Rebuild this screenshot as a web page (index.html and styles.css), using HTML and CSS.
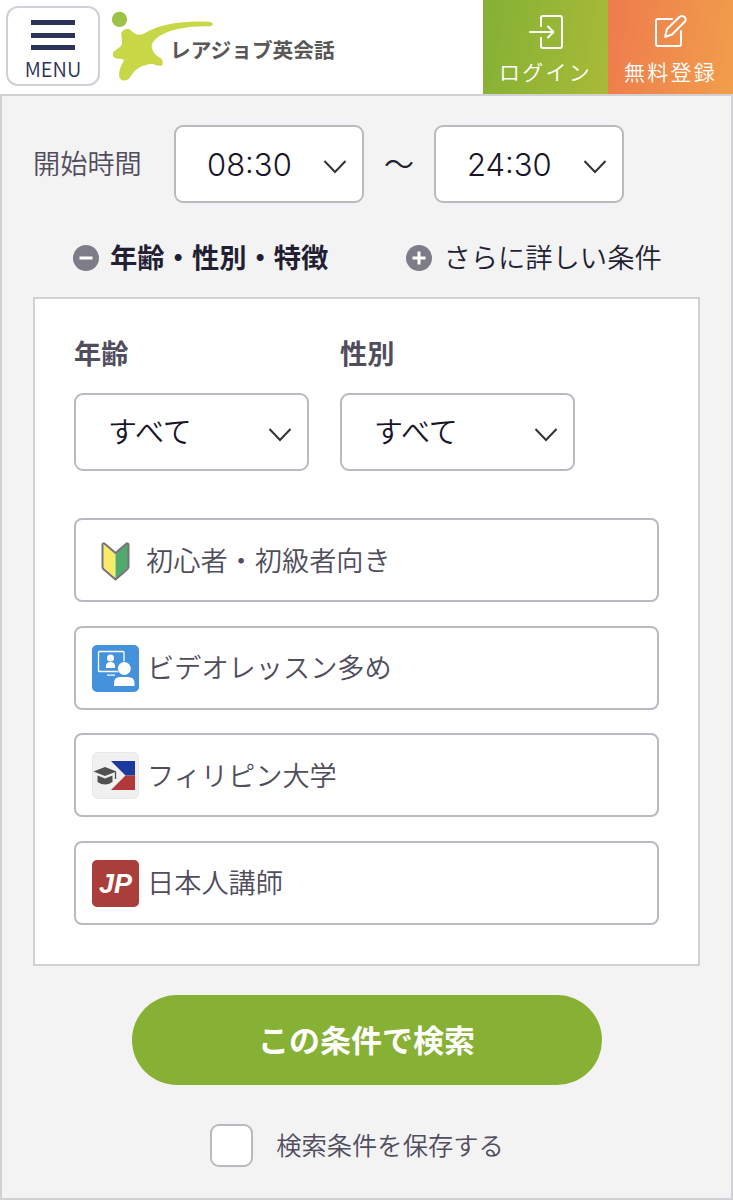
FILE: index.html
```html
<!DOCTYPE html>
<html lang="ja">
<head>
  <meta charset="UTF-8">
  <meta name="viewport" content="width=device-width, initial-scale=1.0">
  <title>講師検索 | レアジョブ英会話</title>
  <link rel="stylesheet" href="styles.css">
</head>
<body>
  <header class="header">
    <button class="menu" type="button">
      <span class="menu-bars"></span>
      <span class="menu-text">MENU</span>
    </button>
    <a class="logo" href="#">
      <svg class="logo-mark" width="104" height="72" viewBox="0 0 104 72">
        <circle cx="9.500" cy="8.400" r="7.700" fill="#9cc346"/>
        <path fill="#c7d745" d="M11.200 24C11 19 17 16 21 19.500C25 24 30 25 35 22C51 12.500 74 9.500 99 10.800Q103 11.500 102.700 13.500Q102 15.300 98 15.300C78 15 60 18 48 26C42 31 41 34 42 37C43 42 47 45 51 47.500C54 51 53 55 50 54.800C47 54.800 45 53 41 53C34 53.500 27 57 23 62C20 66 19 69.500 14 69.500C9 69 8.500 65 9.500 60C10.500 55 13 52 14 49Q13 48 10 47.800C4 48 1 44 4 40.500C7 38 11 36 12 33Q12.500 29 11.200 24Z"/>
      </svg>
      <span class="logo-text">レアジョブ英会話</span>
    </a>
    <a class="header-btn login" href="#">
      <svg width="40" height="40" viewBox="0 0 40 40">
        <path d="M15 15V7q0-2 2-2h17q2 0 2 2v28q0 2-2 2H17q-2 0-2-2v-8M4 21h23M22 15.500l5.500 5.500-5.500 5.500"/>
      </svg>
      <span>ログイン</span>
    </a>
    <a class="header-btn signup" href="#">
      <svg width="40" height="40" viewBox="0 0 40 40">
        <path d="M21 8H7q-2 0-2 2v23q0 2 2 2h21q2 0 2-2V20M14 26l2-8L28.500 6q2.500-2 5 0t0 5L21 23.500Z"/>
      </svg>
      <span>無料登録</span>
    </a>
  </header>

  <main class="search">
    <div class="time-row">
      <span class="time-label">開始時間</span>
      <label class="select time">
        <select><option>08:30</option></select>
        <svg width="24" height="16" viewBox="0 0 24 16"><path d="M1.500 2L12 13L22.500 2"/></svg>
      </label>
      <span class="tilde">〜</span>
      <label class="select time">
        <select><option>24:30</option></select>
        <svg width="24" height="16" viewBox="0 0 24 16"><path d="M1.500 2L12 13L22.500 2"/></svg>
      </label>
    </div>

    <div class="tabs">
      <a class="tab active" href="#">
        <svg width="26" height="26" viewBox="0 0 26 26"><circle cx="13" cy="13" r="13"/><path d="M6.500 13h13"/></svg>
        <span>年齢・性別・特徴</span>
      </a>
      <a class="tab" href="#">
        <svg width="26" height="26" viewBox="0 0 26 26"><circle cx="13" cy="13" r="13"/><path d="M6.500 13h13M13 6.500v13"/></svg>
        <span>さらに詳しい条件</span>
      </a>
    </div>

    <section class="panel">
      <div class="fields">
        <div class="field">
          <h2>年齢</h2>
          <label class="select">
            <select><option>すべて</option></select>
            <svg width="24" height="16" viewBox="0 0 24 16"><path d="M1.500 2L12 13L22.500 2"/></svg>
          </label>
        </div>
        <div class="field">
          <h2>性別</h2>
          <label class="select">
            <select><option>すべて</option></select>
            <svg width="24" height="16" viewBox="0 0 24 16"><path d="M1.500 2L12 13L22.500 2"/></svg>
          </label>
        </div>
      </div>

      <ul class="options">
        <li class="option beginner">
          <svg width="47" height="47" viewBox="0 0 47 47">
            <path fill="#f7ec68" d="M10.500 7.500Q11 5.500 13 7L23.500 16V42L10.500 30Z"/>
            <path fill="#50aa6d" d="M36.500 7.500Q36 5.500 34 7L23.500 16V42L36.500 30Z"/>
            <path fill="none" stroke="#77737b" stroke-width="2" stroke-linejoin="round" d="M10.500 7.500Q11 5.500 13 7L23.500 16L34 7Q36 5.500 36.500 7.500V30Q36 32 34.500 33L23.500 42.500L12.500 33Q10.500 32 10.500 30Z"/>
          </svg>
          <span>初心者・初級者向き</span>
        </li>
        <li class="option">
          <svg width="47" height="47" viewBox="0 0 47 47">
            <rect width="47" height="47" rx="5" fill="#4492dc"/>
            <rect x="6.500" y="6.500" width="25.500" height="20" rx="1" fill="none" stroke="#fff" stroke-width="1.300"/>
            <circle cx="18.500" cy="13" r="3.500" fill="#fff"/>
            <path fill="#fff" d="M14 23v-2q0-4 4.500-4t4.500 4v2ZM15 29.500h8v1.300h-8Z"/>
            <circle cx="32.300" cy="23.500" r="7.300" fill="#4492dc"/>
            <circle cx="32.300" cy="23.500" r="6.500" fill="#fff"/>
            <path fill="#fff" d="M22 41v-3q0-6 6-6h8q6.500 0 6.500 6v3Z"/>
          </svg>
          <span>ビデオレッスン多め</span>
        </li>
        <li class="option">
          <svg width="47" height="47" viewBox="0 0 47 47">
            <rect x=".5" y=".5" width="46" height="46" rx="5" fill="#f0f0f0" stroke="#e8e8e9"/>
            <path fill="#1b399e" d="M19 9h24v14.500H33.500Z"/>
            <path fill="#b1393b" d="M33.500 23.500H43V38H19Z"/>
            <path fill="#505050" d="M1.500 19.500L13 15l11.500 4.500L13 24ZM5.500 23.500l7.500 3 7.500-3v6.500q-7.500 5-15 0Z"/>
            <path fill="none" stroke="#505050" stroke-width="1.300" d="M23.500 20v7"/>
          </svg>
          <span>フィリピン大学</span>
        </li>
        <li class="option">
          <span class="jp">JP</span>
          <span>日本人講師</span>
        </li>
      </ul>
    </section>

    <button class="submit" type="button">この条件で検索</button>
    <label class="save">
      <input type="checkbox">
      <span>検索条件を保存する</span>
    </label>
  </main>
</body>
</html>
```
FILE: styles.css
```css
* {
  box-sizing: border-box;
}

body {
  margin: 0;
  min-height: 1200px;
  display: flex;
  flex-direction: column;
  font-family: "Noto Sans CJK JP", sans-serif;
  font-size: 27.2px;
  font-weight: 350;
  line-height: 1.5;
  color: #231f33;
  background: #fff;
}

a {
  color: inherit;
  text-decoration: none;
}

/* header */
.header {
  display: flex;
  height: 94px;
}

.menu {
  width: 94px;
  height: 80px;
  margin: 6px 0 0 6px;
  padding: 12px 0 0;
  display: flex;
  flex-direction: column;
  align-items: center;
  border: 2px solid #d0d0d7;
  border-radius: 12px;
  background: #fff;
  color: #2c3358;
  font-family: inherit;
}

.menu-bars {
  width: 44px;
  height: 30px;
  border-top: 5px solid #2c3358;
  border-bottom: 5px solid #2c3358;
  background: linear-gradient(#2c3358, #2c3358) center / 100% 5px no-repeat;
}

.menu-text {
  margin-top: 5px;
  font-size: 20px;
  font-weight: 350;
  line-height: 28px;
}

.logo {
  flex: 1;
  display: flex;
}

.logo-mark {
  flex: none;
  margin: 11px 0 0 10px;
}

.logo-text {
  margin: 33px 0 0 -44px;
  font-size: 20.7px;
  font-weight: 700;
  line-height: 32px;
  white-space: nowrap;
  color: #595757;
}

.header-btn {
  width: 125px;
  display: flex;
  flex-direction: column;
  align-items: center;
  color: #fff;
  font-size: 21px;
  line-height: 32px;
  letter-spacing: 2.2px;
}

.header-btn svg {
  margin-top: 11px;
  fill: none;
  stroke: #fff;
  stroke-width: 2;
  stroke-linecap: round;
  stroke-linejoin: round;
}

.header-btn span {
  margin: 4px 0 0;
}

.login {
  background: linear-gradient(100deg, #84b134, #a9ba38);
}

.signup {
  background: linear-gradient(100deg, #ee7b4d, #f19e4b);
}

/* search form */
.search {
  flex: 1;
  padding: 29px 31px 0;
  border: 2px solid #d0d0d5;
  background: #f3f3f3;
}

.time-row {
  display: flex;
  align-items: center;
}

.time-label {
  width: 141px;
  margin-top: -4px;
  color: #504d5d;
}

.select {
  display: grid;
  width: 235px;
  height: 78px;
}

.select select {
  grid-area: 1 / 1;
  appearance: none;
  padding: 0 32px 2px;
  border: 2px solid #bab9c0;
  border-radius: 9px;
  background: #fff;
  color: #18152a;
  font: inherit;
  font-size: 29px;
}

.select svg {
  grid-area: 1 / 1;
  place-self: center end;
  margin: 5px 17px 0 0;
  fill: none;
  stroke: #333;
  stroke-width: 2;
  pointer-events: none;
}

.select.time {
  width: 190px;
}

.time select {
  padding: 2px 31px 0;
  font-family: Inter, sans-serif;
  font-size: 31px;
  font-weight: 350;
}

.tilde {
  width: 70px;
  margin-top: -4px;
  text-align: center;
  font-size: 30px;
}

.tabs {
  display: flex;
  gap: 78px;
  margin: 34px 0 18px 40px;
}

.tab {
  display: flex;
  align-items: center;
  gap: 11px;
  height: 42px;
  font-size: 27.3px;
}

.tab svg {
  fill: #7f7c89;
  stroke: #fff;
  stroke-width: 3;
}

.tab circle {
  stroke: none;
}

.tab span {
  padding-bottom: 3px;
}

.tab.active {
  font-weight: 700;
}

.panel {
  height: 669px;
  padding: 32px 39px 0;
  border: 2px solid #d0d0d5;
  background: #fff;
}

.fields {
  display: flex;
  gap: 31px;
}

.field h2 {
  margin: 0 0 20px;
  font-size: 27.2px;
  font-weight: 700;
  line-height: 42px;
  color: #504d5d;
}

.options {
  display: grid;
  gap: 23.6px;
  margin: 47px 0 0;
  padding: 0;
  list-style: none;
}

.option {
  display: flex;
  align-items: center;
  gap: 8px;
  height: 84px;
  padding-left: 16px;
  border: 2px solid #bab9c0;
  border-radius: 8px;
  color: #504d5d;
}

.option span:last-child {
  margin-top: -2px;
}

.beginner {
  gap: 7px;
}

.option svg,
.jp {
  margin-top: 1px;
}

.jp {
  width: 47px;
  height: 47px;
  border-radius: 5px;
  background: #aa3e3a;
  color: #fff;
  font: italic 700 27px/48px "Liberation Sans", Arial, sans-serif;
  text-align: center;
}

.submit {
  display: block;
  width: 470px;
  height: 90px;
  margin: 29px auto 0;
  padding-bottom: 3px;
  border: 0;
  border-radius: 45px;
  background: #86b135;
  color: #fff;
  font: inherit;
  font-size: 31px;
  font-weight: 700;
}

.save {
  display: flex;
  align-items: center;
  justify-content: center;
  gap: 23px;
  margin: 39px 19px 0 0;
  font-size: 25.3px;
  color: #504d5d;
}

.save span {
  margin-top: -2px;
}

.save input {
  appearance: none;
  width: 43px;
  height: 43px;
  margin: 0;
  border: 2px solid #bab9c0;
  border-radius: 9px;
  background: #fff;
}
```
